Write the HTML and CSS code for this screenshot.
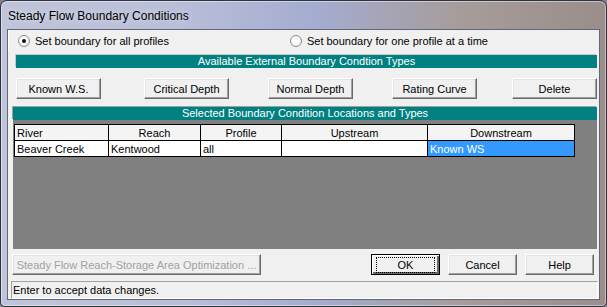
FILE: index.html
```html
<!DOCTYPE html>
<html lang="en">
  <head>
    <meta charset="UTF-8" />
    <title>Steady Flow Boundary Conditions</title>
    <link rel="stylesheet" href="styles.css">
  </head>
  <body>
    <div class="window">
      <div class="titlebar">Steady Flow Boundary Conditions</div>
      <div class="client">
        <div class="radios">
          <label class="radio"><span class="dot checked"></span>Set boundary for all profiles</label>
          <label class="radio radio-one"><span class="dot"></span>Set boundary for one profile at a time</label>
        </div>

        <div class="band band-types">Available External Boundary Condtion Types</div>
        <div class="type-buttons">
          <button class="btn">Known W.S.</button>
          <button class="btn">Critical Depth</button>
          <button class="btn">Normal Depth</button>
          <button class="btn">Rating Curve</button>
          <button class="btn">Delete</button>
        </div>

        <div class="band band-sel">Selected Boundary Condition Locations and Types</div>
        <div class="grid-area">
          <table class="grid">
            <thead>
              <tr>
                <th class="c-river left">River</th>
                <th class="c-reach">Reach</th>
                <th class="c-profile">Profile</th>
                <th class="c-up">Upstream</th>
                <th class="c-down">Downstream</th>
              </tr>
            </thead>
            <tbody>
              <tr>
                <td>Beaver Creek</td>
                <td>Kentwood</td>
                <td>all</td>
                <td></td>
                <td class="selected">Known WS</td>
              </tr>
            </tbody>
          </table>
        </div>

        <div class="actions">
          <button class="btn wide" disabled>Steady Flow Reach-Storage Area Optimization ...</button>
          <div class="dialog-buttons">
            <button class="btn default"><span class="focus">OK</span></button>
            <button class="btn">Cancel</button>
            <button class="btn">Help</button>
          </div>
        </div>

        <div class="status">Enter to accept data changes.</div>
      </div>
    </div>
  </body>
</html>
```

FILE: styles.css
```css
body {
  margin: 0;
  background: #7d7f8c;
  font-family: "Liberation Sans", Arial, sans-serif;
  font-size: 11px;
}
.window {
  width: 607px;
  height: 307px;
  box-sizing: border-box;
  border: 1px solid #30343f;
  border-radius: 7px 7px 5px 5px;
  background: linear-gradient(90deg, #bfc4d9 0%, #b8bed8 30%, #a4acd0 52%, #a69c9a 76%, #9a8e8a 100%);
  box-shadow: inset 0 0 0 1px rgba(255, 255, 255, 0.45);
  padding: 0 6px 7px 6px;
  display: flex;
  flex-direction: column;
}
.titlebar {
  height: 28px;
  line-height: 30px;
  padding-left: 1px;
  font-size: 12px;
  color: #000;
  text-shadow: 0 0 6px rgba(255, 255, 255, 0.7);
}
.client {
  flex: 1;
  background: #f0f0f0;
  border: 1px solid #62667a;
  display: flex;
  flex-direction: column;
}
.radios {
  height: 22px;
  display: flex;
  align-items: center;
  padding-left: 9px;
  border-left: 1px solid #fff;
}
.radio {
  display: flex;
  align-items: center;
  gap: 5px;
}
.radio-one {
  margin-left: 121px;
}
.dot {
  width: 10px;
  height: 10px;
  border: 1px solid #8d8d8d;
  border-radius: 50%;
  background: radial-gradient(circle at 40% 40%, #fff 30%, #e4e4e4 100%);
  position: relative;
}
.dot.checked::after {
  content: "";
  position: absolute;
  left: 3px;
  top: 3px;
  width: 4px;
  height: 4px;
  border-radius: 50%;
  background: #111;
}
.band {
  height: 13px;
  line-height: 13px;
  background: #008080;
  color: #fff;
  text-align: center;
}
.band-types {
  margin: 3px 2px 0 8px;
  box-shadow: -1px -1px 0 #c8c8c8;
}
.band-sel {
  margin: 8px 2px 0 5px;
  box-shadow: -1px -1px 0 #a0a0a0;
}
.type-buttons {
  margin: 10px 2px 0 8px;
  display: grid;
  grid-template-columns: 128px 124px 124px 120px 85px;
}
.btn {
  height: 21px;
  padding: 0;
  font: inherit;
  color: #000;
  background: #f0f0f0;
  border: 1px solid;
  border-color: #fff #696969 #696969 #fff;
  box-shadow: inset -1px -1px #a0a0a0, inset 1px 1px #e3e3e3;
}
.type-buttons .btn {
  width: 85px;
}
.grid-area {
  height: 129px;
  margin: 0 2px 0 5px;
  background: #808080;
  padding: 4px 0 0 1px;
  box-sizing: border-box;
}
.grid {
  border-collapse: collapse;
  table-layout: fixed;
}
.grid th,
.grid td {
  border: 1px solid #000;
  height: 15px;
  padding: 0 2px;
  font-weight: normal;
  white-space: nowrap;
  overflow: hidden;
}
.grid th {
  background: #f4f4f4;
  text-align: center;
}
.grid th.left {
  text-align: left;
}
.grid td {
  background: #fff;
  text-align: left;
}
.grid td.selected {
  background: #3399ff;
  color: #fff;
}
.c-river { width: 89px; }
.c-reach { width: 87px; }
.c-profile { width: 76px; }
.c-up { width: 141px; }
.c-down { width: 142px; }
.actions {
  margin: 5px 5px 0 4px;
  display: flex;
  justify-content: space-between;
}
.btn.wide {
  width: 249px;
  color: #a0a0a0;
}
.dialog-buttons {
  display: flex;
  gap: 8px;
}
.dialog-buttons .btn {
  width: 69px;
}
.btn.default {
  border: 1px solid #000;
  box-shadow: inset 1px 1px #fff, inset -2px -2px #696969;
}
.focus {
  display: inline-block;
  width: 57px;
  height: 14px;
  line-height: 14px;
  border: 1px dotted #000;
}
.status {
  margin: 6px 1px 0 3px;
  height: 16px;
  line-height: 16px;
  padding-left: 1px;
  border: 1px solid;
  border-color: #a0a0a0 #fff #fff #a0a0a0;
}
```
